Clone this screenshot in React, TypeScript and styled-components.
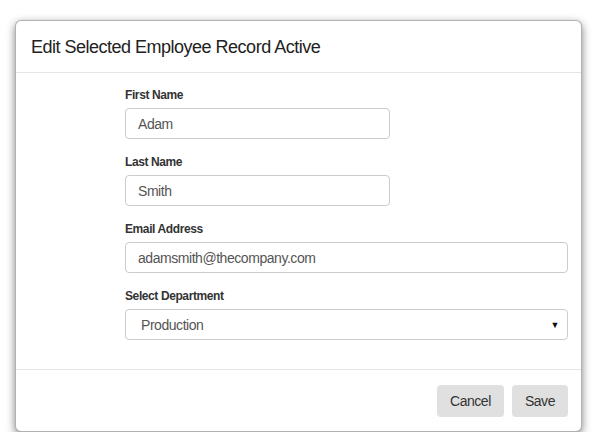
import React from "react";
import styled, { createGlobalStyle } from "styled-components";

const Global = createGlobalStyle`
  html, body { margin: 0; padding: 0; background: #fff; }
  body { font-family: "Liberation Sans", Arial, sans-serif; }
  * { box-sizing: border-box; }
`;

const Page = styled.div`
  padding: 20px 18px 0 15px;
  width: 600px;
`;

const Modal = styled.div`
  width: 567px;
  background: #fff;
  border: 1px solid rgba(0, 0, 0, 0.3);
  border-radius: 6px;
  box-shadow: 0 3px 9px rgba(0, 0, 0, 0.5);
  display: flex;
  flex-direction: column;
`;

const Header = styled.div`
  height: 52px;
  padding: 0 15px;
  display: flex;
  align-items: center;
  border-bottom: 1px solid #e5e5e5;
`;

const Title = styled.h4`
  margin: 0;
  font-size: 18px;
  font-weight: normal;
  letter-spacing: -0.5px;
  color: #222;
  padding-top: 1px;
`;

const Body = styled.div`
  padding: 15px 14px 29px 109px;
  display: flex;
  flex-direction: column;
`;

const Group = styled.div<{ $last?: boolean }>`
  display: flex;
  flex-direction: column;
  margin-bottom: ${(p) => (p.$last ? "0" : "16px")};
`;

const Label = styled.label`
  font-size: 12px;
  font-weight: bold;
  letter-spacing: -0.4px;
  color: #333;
  line-height: 15px;
  margin-bottom: 5px;
`;

const Input = styled.div<{ $wide?: boolean }>`
  width: ${(p) => (p.$wide ? "443px" : "265px")};
  height: 31px;
  border: 1px solid #ccc;
  border-radius: 4px;
  padding: 0 12px;
  display: flex;
  align-items: center;
  font-size: 14px;
  letter-spacing: -0.45px;
  color: #555;
`;

const Select = styled(Input)`
  justify-content: space-between;
  padding: 0 8px 0 15px;
`;

const Arrow = styled.span`
  font-size: 9px;
  color: #111;
`;

const Footer = styled.div`
  border-top: 1px solid #e5e5e5;
  padding: 15px 13px 14px 15px;
  display: flex;
  justify-content: flex-end;
  gap: 8px;
`;

const Button = styled.button`
  height: 32px;
  padding: 0 13px;
  background: #e0e0e0;
  border: none;
  border-radius: 4px;
  font-family: "Liberation Sans", Arial, sans-serif;
  font-size: 14px;
  letter-spacing: -0.45px;
  color: #333;
`;

export default function App() {
  return (
    <>
      <Global />
      <Page>
        <Modal>
          <Header>
            <Title>Edit Selected Employee Record Active</Title>
          </Header>
          <Body>
            <Group>
              <Label>First Name</Label>
              <Input>Adam</Input>
            </Group>
            <Group>
              <Label>Last Name</Label>
              <Input>Smith</Input>
            </Group>
            <Group>
              <Label>Email Address</Label>
              <Input $wide>adamsmith@thecompany.com</Input>
            </Group>
            <Group $last>
              <Label>Select Department</Label>
              <Select $wide>
                <span>Production</span>
                <Arrow>▼</Arrow>
              </Select>
            </Group>
          </Body>
          <Footer>
            <Button>Cancel</Button>
            <Button>Save</Button>
          </Footer>
        </Modal>
      </Page>
    </>
  );
}
